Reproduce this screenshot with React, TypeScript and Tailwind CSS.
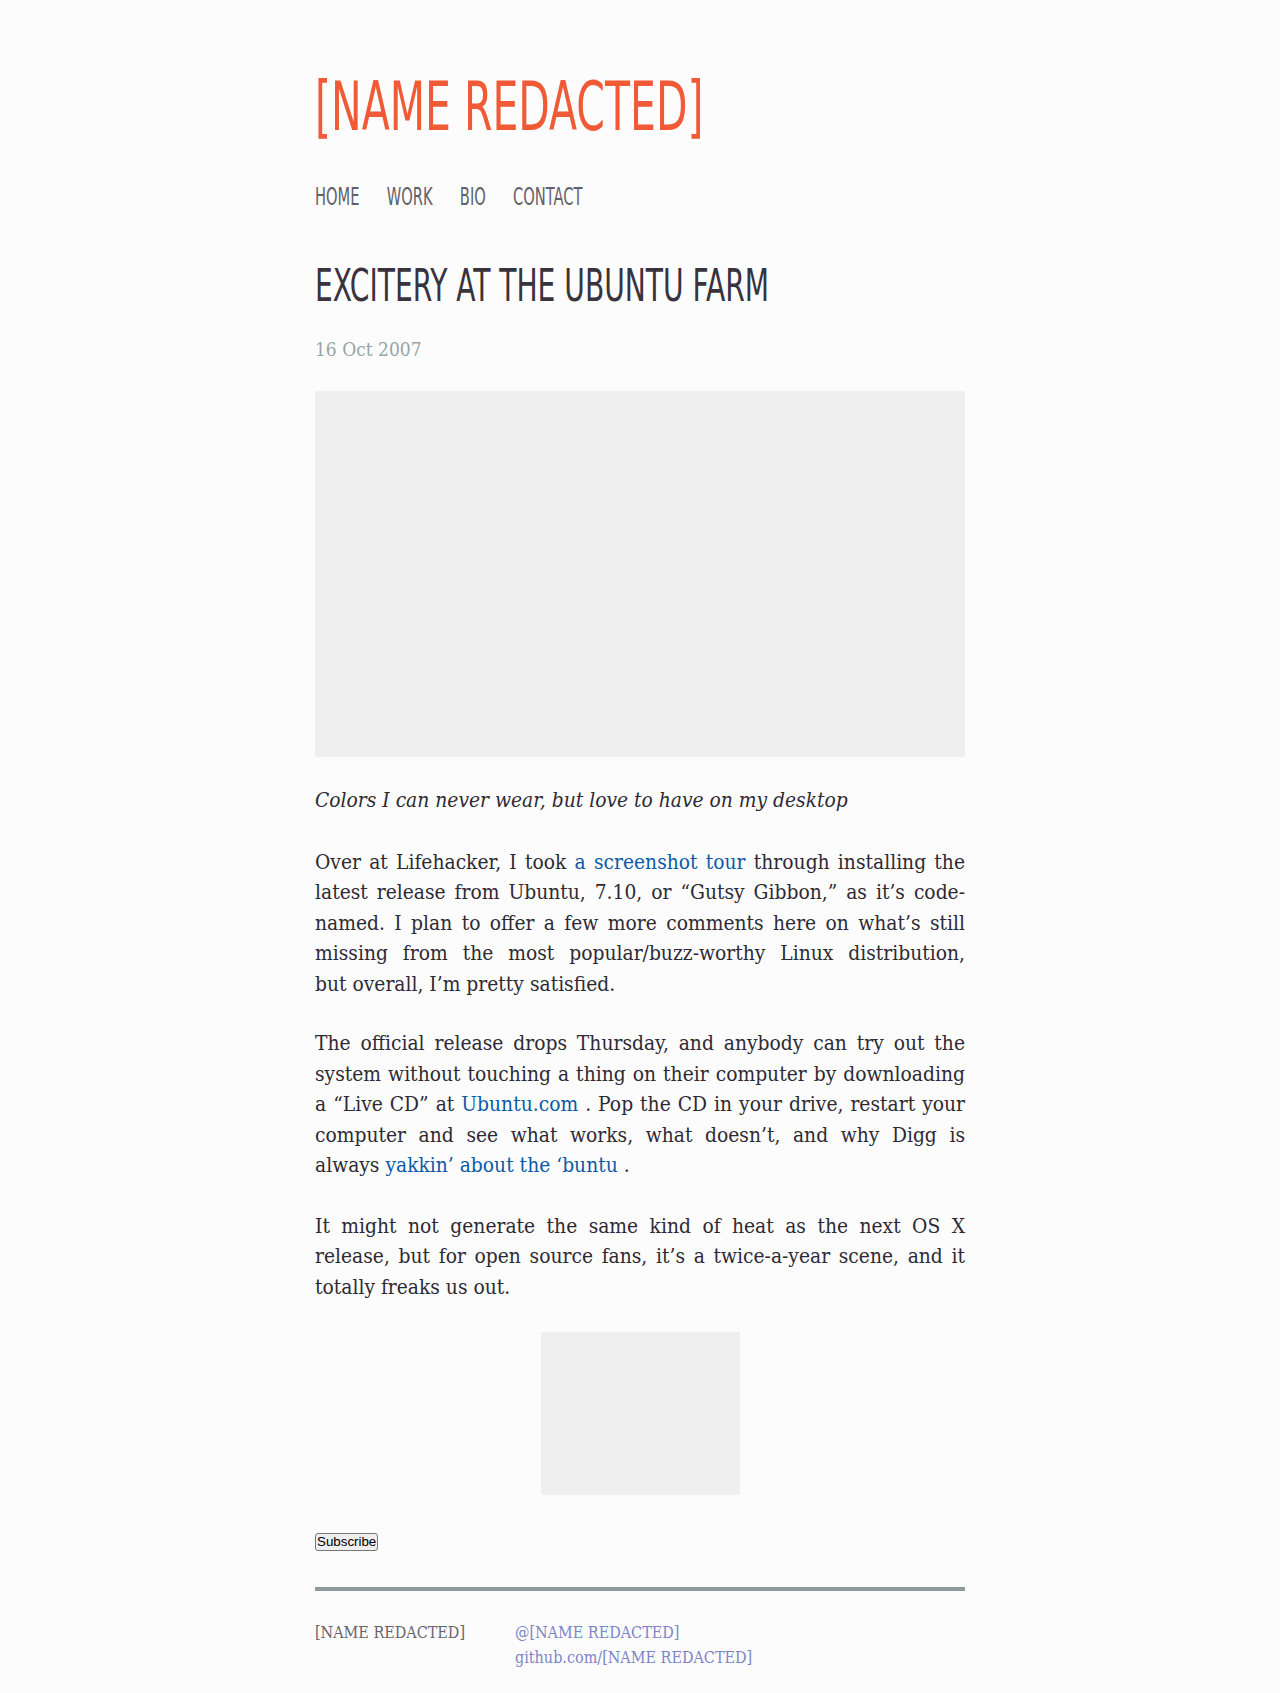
const head = "font-['Liberation_Sans_Narrow','DejaVu_Sans_Condensed','Liberation_Sans',sans-serif]";
const body = "font-['DejaVu_Serif_Condensed','DejaVu_Serif',serif]";

function Link({ children }: { children: React.ReactNode }) {
  return <a href="#" className="text-[#0b5aa6]">{children}</a>;
}

export default function App() {
  return (
    <div className={`min-h-[1693px] bg-[#fcfcfc] ${body}`}>
      <div className="mx-auto w-[650px] pt-[74px] pb-[23px]">
        <h1 className={`${head} origin-left scale-x-[0.68] text-[67px] leading-none text-[#f05a37] whitespace-nowrap`}>
          [NAME REDACTED]
        </h1>

        <nav className={`${head} mt-[44px] flex gap-[40px] origin-left scale-x-[0.68] text-[24px] leading-none text-[#635f68]`}>
          <a href="#">HOME</a>
          <a href="#">WORK</a>
          <a href="#">BIO</a>
          <a href="#">CONTACT</a>
        </nav>

        <h2 className={`${head} mt-[54px] origin-left scale-x-[0.695] text-[45px] leading-none text-[#38333d] whitespace-nowrap`}>
          EXCITERY AT THE UBUNTU FARM
        </h2>

        <div className="mt-[26px] text-[19px] leading-[30px] text-[#95a5a6]">16 Oct 2007</div>

        <div className="mt-[27px] h-[366px] bg-[#efefef]" />

        <div className="text-[20.8px] leading-[30.5px] text-[#2e2a33]">
          <p className="mt-[28px] italic">Colors I can never wear, but love to have on my desktop</p>

          <p className="mt-[31px] text-justify">
            Over at Lifehacker, I took <Link>a screenshot tour</Link> through installing the latest release
            from Ubuntu, 7.10, or “Gutsy Gibbon,” as it’s code-named. I plan to offer a few more comments
            here on what’s still missing from the most popular/buzz-worthy Linux distribution, but{"\u00a0"}overall,
            I’m pretty satisfied.
          </p>

          <p className="mt-[29px] text-justify">
            The official release drops Thursday, and anybody can try out the system without touching a thing
            on their computer by downloading a “Live CD” at <Link>Ubuntu.com</Link> . Pop the CD in your
            drive, restart your computer and see what works, what doesn’t, and why Digg is always{" "}
            <Link>yakkin’ about the ‘buntu</Link> .
          </p>

          <p className="mt-[30px] text-justify">
            It might not generate the same kind of heat as the next OS X release, but for open source fans,
            it’s a twice-a-year scene, and it totally freaks us out.
          </p>
        </div>

        <div className="mt-[30px] flex justify-center">
          <div className="h-[163px] w-[199px] bg-[#efefef]" />
        </div>

        <div className="mt-[34px]">
          <button className="rounded-[3px] border border-[#767676] bg-[#efefef] px-[1px] py-[1px] font-['Liberation_Sans',Arial,sans-serif] text-[13.33px] leading-[14px] text-black">
            Subscribe
          </button>
        </div>

        <div className="mt-[34px] h-[4px] bg-[#8f9a9a]" />

        <footer className="mt-[29px] grid grid-cols-[200px_1fr] text-[16px] leading-[25px]">
          <div className="text-[#67636b]">[NAME REDACTED]</div>
          <div className="flex flex-col text-[#7d84c8]">
            <a href="#">@[NAME REDACTED]</a>
            <a href="#">github.com/[NAME REDACTED]</a>
          </div>
        </footer>
      </div>
    </div>
  );
}
